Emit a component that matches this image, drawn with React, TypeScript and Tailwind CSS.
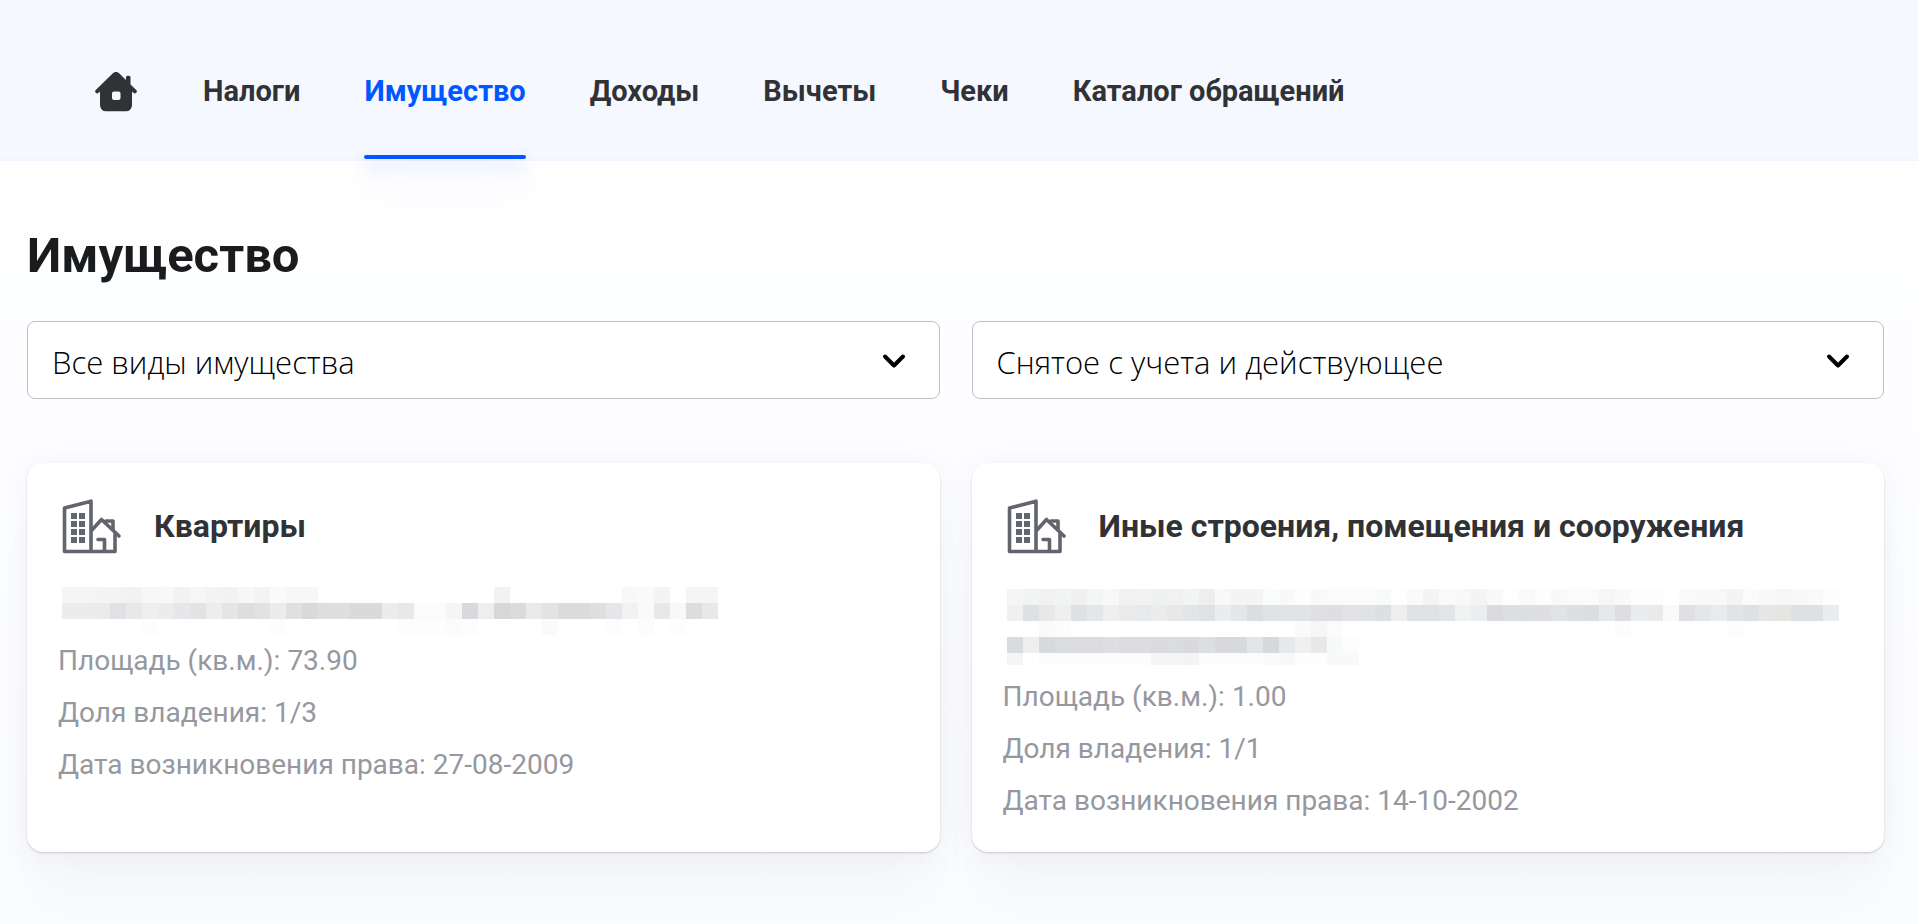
import React from "react";

type Filter = { id: string; label: string; options: string[] };
type Property = { title: string; mask: MaskData; facts: [string, string][] };
type MaskData = { columns: number; height: number; frame: string; rows: string[] };

const NAV = ["Налоги", "Имущество", "Доходы", "Вычеты", "Чеки", "Каталог обращений"];
const ACTIVE = "Имущество";

const FILTERS: Filter[] = [
  { id: "kind", label: "Вид имущества", options: ["Все виды имущества"] },
  { id: "status", label: "Статус имущества", options: ["Снятое с учета и действующее"] },
];

const CELL = 16;

// Each row lists cell colours; "n*colour" repeats a cell and "-" leaves it empty.
const APARTMENT_MASK: MaskData = {
  columns: 41,
  height: 48,
  frame: "h-12",
  rows: [
    "2*f5f5f5 f3f5f4 f3f3f3 f2f2f2 f7f7f7 f8f8f8 f2f2f3 f6f6f6 f3f3f3 f2f2f2 f7f7f7 f3f3f3 fafafa 2*f7f7f7 11*- f2f2f2 7*- f8f8f8 fafafa f4f4f4 fefefe 2*f5f5f5",
    "2*ececec ebebea e0e1e4 e7e8ea eeeff1 ececec e6e7ea e3e3e5 ecedec e5e5e7 dedee0 e1e2e4 ececec dfe0e2 d8d9db dddee0 dedfe1 dbdadb d9dadc ebecee e7e8ea 2*fbfbfb f5f5f5 d8d9dc eeeeee d6d7d9 dadbdd e8e9eb e2e3e5 2*dadbdd dedfe1 e4e6e9 f2f2f2 fafafa e7e8ea f8f8f9 dddddf e7e8ea",
    "5*- fdfdfd 7*- fdfdfd 7*- 3*fdfdfd fbfbfb fdfdfd 4*- fafafa 3*- fdfdfd - fcfcfc - fdfdfd",
  ],
};

const BUILDING_MASK: MaskData = {
  columns: 52,
  height: 76,
  frame: "h-[84px] pt-0.5",
  rows: [
    "f5f5f5 f2f4f3 f0f1f0 f2f4f4 f0f0f0 f3f6f5 f8f8f8 f1f1f1 f2f2f2 eff1f0 f0f1f0 f3f5f5 eeeeee f8f8f8 2*f4f4f4 fafcfb f9f9f9 fdfdfd f9f9f9 3*fbfbfb f9fafa fefefe fafafa f4f4f4 fafafa f8f8f8 f4f4f4 f9f9f9 fefefe fafafa fdfdfd f9f9f9 2*fbfbfb f6f6f6 f9f9f9 2*fdfdfd - fafafa 2*f8f8f8 f4f4f4 fbfbfb f8f8f8 f6f7f6 f8f8f8 fafafa fdfdfd",
    "f0f0f0 dfe0e3 e8e8e8 efefef dfe0e3 e5e6e9 efefef ebebeb e8e9ec ececec e8e8e8 e3e4e6 e0e1e3 ebecee e5e6e8 dcdddf e1e2e4 2*e2e3e5 e0e0e2 dfdfe1 e3e3e6 e1e2e4 dedfe1 eeeeee 2*e0e1e3 e3e4e6 f1f3f2 ecedef dbdadc dedfe1 dddee0 dfdee0 e2e3e5 dedfe1 dcdddf e7e8ea dedddf ebecef eaeaea fafafa e0e0e2 e5e6e8 eaebed e2e3e5 dfe0e3 e6e6e6 e5e5e4 2*dfe0e2 ebecee",
    "2*- fafafa fcfcfc 14*- fafafa f6f6f6 fbfbfb 17*- fcfcfc 3*- 2*fefefe - fdfdfd",
    "dadbdd eeeeee d8d9db dbdcde 2*dcdbdd dfdfe1 2*dcdcde dbdbdd dbdcde dadadc dddee0 d9d9db d8d9db e3e4e6 d7d8da e7e8ea f0f0f0 e8e8e8 f8faf9 fdfdfd",
    "f5f5f5 - 7*fcfcfc 2*f4f5f5 f2f5f4 4*fcfcfc fafafa f8f8f8 2*fdfdfd 2*f9f9f9",
  ],
};

const PROPERTIES: Property[] = [
  {
    title: "Квартиры",
    mask: APARTMENT_MASK,
    facts: [
      ["Площадь (кв.м.)", "73.90"],
      ["Доля владения", "1/3"],
      ["Дата возникновения права", "27-08-2009"],
    ],
  },
  {
    title: "Иные строения, помещения и сооружения",
    mask: BUILDING_MASK,
    facts: [
      ["Площадь (кв.м.)", "1.00"],
      ["Доля владения", "1/1"],
      ["Дата возникновения права", "14-10-2002"],
    ],
  },
];

function expandRow(row: string): string[] {
  return row.split(" ").flatMap((token) => {
    const [first, second] = token.split("*");
    return second ? Array<string>(Number(first)).fill(second) : [first];
  });
}

function HiddenAddress({ mask }: { mask: MaskData }) {
  const width = mask.columns * CELL;
  return (
    <div className={mask.frame}>
      <svg
        className="ml-1 block max-w-full"
        width={width}
        height={mask.height}
        viewBox={`0 0 ${width} ${mask.height}`}
        shapeRendering="crispEdges"
        aria-hidden="true"
      >
        {mask.rows.map((row, y) =>
          expandRow(row).map((color, x) =>
            color === "-" ? null : (
              <rect key={`${x}-${y}`} x={x * CELL} y={y * CELL} width={CELL} height={CELL} fill={`#${color}`} />
            ),
          ),
        )}
      </svg>
    </div>
  );
}

function HomeIcon() {
  return (
    <svg width="42" height="40" viewBox="0 0 42 40" aria-hidden="true">
      <path
        fill="#313236"
        fillRule="evenodd"
        d="M17.6 1.5a5 5 0 0 1 6.8 0L31 7.900V5.200A1.500 1.500 0 0 1 32.500 3.700h1.500A1.500 1.500 0 0 1 35.500 5.200v7.200l5.700 5.500a2 2 0 0 1-2.800 2.900L37 19.600V33a6 6 0 0 1-6 6.300H11A6 6 0 0 1 5 33V19.600l-1.400 1.200a2 2 0 0 1-2.800-2.900ZM19 19.500a2 2 0 0 0-2 2v4.500a2 2 0 0 0 2 2h4.500a2 2 0 0 0 2-2v-4.500a2 2 0 0 0-2-2Z"
      />
    </svg>
  );
}

function EstateIcon() {
  return (
    <svg
      width="60"
      height="56"
      viewBox="0 0 60 56"
      fill="none"
      stroke="#62656d"
      strokeWidth="3.6"
      strokeLinecap="round"
      strokeLinejoin="round"
      aria-hidden="true"
    >
      <path d="M29 52.500H2.500V9L29 2.200Z" />
      <path d="M29 52.500H53V35" />
      <path d="M30 31 39.500 20.500 57 37" />
      <path d="M44 22H51V30" />
      <path d="M36 40.500H42.500V52" />
      <g fill="#62656d" stroke="none">
        {[14, 22, 30, 38].map((y) => (
          <g key={y}>
            <rect x="9" y={y} width="6" height="6" />
            <rect x="17" y={y} width="6" height="6" />
          </g>
        ))}
      </g>
    </svg>
  );
}

function FilterSelect({ filter }: { filter: Filter }) {
  return (
    <div className="relative">
      <select
        id={filter.id}
        aria-label={filter.label}
        className="h-[78px] w-full appearance-none rounded-lg border border-[#bfc0c5] bg-white pt-1 pr-20 pl-6 font-['Open_Sans',sans-serif] text-[31px] font-light text-black"
      >
        {filter.options.map((option) => (
          <option key={option}>{option}</option>
        ))}
      </select>
      <svg
        className="pointer-events-none absolute top-8 right-[34px]"
        width="24"
        height="16"
        viewBox="0 0 24 16"
        fill="none"
        stroke="#000"
        strokeWidth="4"
        strokeLinecap="round"
        strokeLinejoin="round"
        aria-hidden="true"
      >
        <path d="M3 3.500 12 12.500 21 3.500" />
      </svg>
    </div>
  );
}

function PropertyCard({ property }: { property: Property }) {
  return (
    <article className="rounded-2xl bg-white px-[31px] pt-8 pb-[25px] shadow-[0_1px_2px_rgba(0,0,0,0.18),0_2px_32px_rgba(90,100,120,0.07),0_56px_48px_-8px_rgba(90,100,120,0.03)]">
      <div className="flex items-start gap-8">
        <div className="pt-1 pl-1">
          <EstateIcon />
        </div>
        <h2 className="text-[32px] leading-[62px] font-bold text-[#313236]">{property.title}</h2>
      </div>
      <div className="pt-[30px]">
        <HiddenAddress mask={property.mask} />
      </div>
      <dl className="text-[28px] leading-[52px] text-[#96989f]">
        {property.facts.map(([name, value]) => (
          <div key={name} className="flex gap-[7px]">
            <dt>{name}:</dt>
            <dd>{value}</dd>
          </div>
        ))}
      </dl>
    </article>
  );
}

export default function App() {
  return (
    <div className="min-h-screen bg-linear-to-b from-white to-[#fbfcff] font-[Roboto,sans-serif]">
      <header className="border-b-2 border-[#eff4ff] bg-[#f5f8ff]">
        <nav className="flex items-stretch gap-16 px-[95px]">
          <a href="#home" aria-label="Главная" className="flex items-center pt-6 pr-0.5">
            <HomeIcon />
          </a>
          {NAV.map((item) =>
            item === ACTIVE ? (
              <a key={item} href="#property" aria-current="page" className="flex flex-col text-[29px] font-bold text-[#0056ff]">
                <span className="pt-[71px] leading-10">{item}</span>
                <span className="mt-11 h-1 rounded-full bg-[#0056ff] shadow-[0_8px_16px_rgba(0,86,255,0.2),0_16px_40px_rgba(0,86,255,0.15)]" />
              </a>
            ) : (
              <a key={item} href="#section" className="pt-[71px] text-[29px] leading-10 font-bold text-[#313236]">
                {item}
              </a>
            ),
          )}
        </nav>
      </header>
      <main className="pt-[62px] pr-[34px] pb-16 pl-[27px]">
        <h1 className="text-[49px] leading-[66px] font-bold text-[#1a1b1d]">Имущество</h1>
        <div className="grid grid-cols-2 gap-x-8 pt-8">
          {FILTERS.map((filter) => (
            <FilterSelect key={filter.id} filter={filter} />
          ))}
        </div>
        <div className="grid grid-cols-2 gap-x-8 pt-16">
          {PROPERTIES.map((property) => (
            <PropertyCard key={property.title} property={property} />
          ))}
        </div>
      </main>
    </div>
  );
}
